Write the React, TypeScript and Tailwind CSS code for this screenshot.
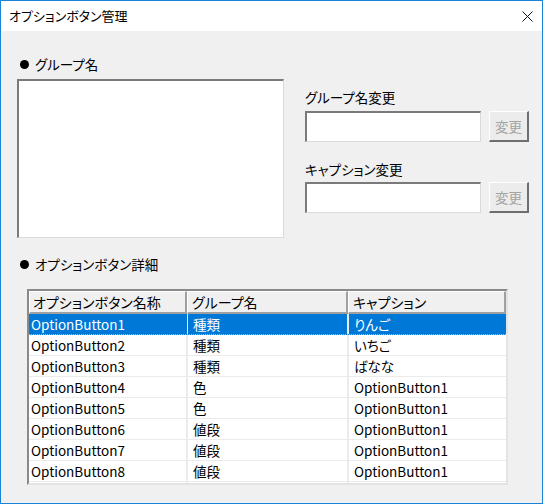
import React from 'react';

const rows = [
  { name: 'OptionButton1', group: '種類', caption: 'りんご' },
  { name: 'OptionButton2', group: '種類', caption: 'いちご' },
  { name: 'OptionButton3', group: '種類', caption: 'ばなな' },
  { name: 'OptionButton4', group: '色', caption: 'OptionButton1' },
  { name: 'OptionButton5', group: '色', caption: 'OptionButton1' },
  { name: 'OptionButton6', group: '値段', caption: 'OptionButton1' },
  { name: 'OptionButton7', group: '値段', caption: 'OptionButton1' },
  { name: 'OptionButton8', group: '値段', caption: 'OptionButton1' },
];

const font = "font-['Meiryo_UI','Noto_Sans_CJK_JP',sans-serif] [font-feature-settings:'palt']";

const Heading: React.FC<{ text: string }> = ({ text }) => (
  <div className="flex items-center h-[20px] text-[13.5px] text-black">
    <span className="ml-[3px] w-[9px] h-[9px] rounded-full bg-black" />
    <span className="ml-[6px]">{text}</span>
  </div>
);

const Sunken: React.FC<{ className?: string; children?: React.ReactNode }> = ({ className = '', children }) => (
  <div className={`border-t-2 border-l-2 border-r border-b border-t-[#7a7a7a] border-l-[#7a7a7a] border-r-[#dadada] border-b-[#dadada] bg-white ${className}`}>
    {children}
  </div>
);

const DisabledButton: React.FC = () => (
  <button
    disabled
    className="w-[40px] h-[31px] bg-[#ececec] border-t border-l border-r-2 border-b-2 border-t-white border-l-white border-r-[#6e6e6e] border-b-[#6e6e6e] text-[13.5px] text-[#a3a3a3] flex items-center justify-center"
  >
    変更
  </button>
);

const App: React.FC = () => {
  return (
    <div className={`w-[543px] h-[504px] flex flex-col border border-[#1883d7] ${font}`}>
      {/* title bar */}
      <div className="h-[30px] bg-white flex items-center justify-between pl-[8px] pr-[9px]">
        <span className="text-[13px] text-black">オプションボタン管理</span>
        <svg width="11" height="11" viewBox="0 0 11 11">
          <path d="M0.5 0.5L10.5 10.5M10.5 0.5L0.5 10.5" stroke="#111" strokeWidth="1" />
        </svg>
      </div>

      <div className="flex-1 bg-[#f0f0f0] pl-[16px] flex flex-col">
        <div className="mt-[23px]">
          <Heading text="グループ名" />
        </div>

        <div className="mt-[5px] flex">
          <Sunken className="w-[267px] h-[159px]" />
          <div className="ml-[21px] pt-[8px] flex flex-col">
            <div className="h-[20px] flex items-center text-[13.5px] text-black">グループ名変更</div>
            <div className="mt-[4px] flex">
              <Sunken className="w-[176px] h-[31px]" />
              <div className="ml-[8px]">
                <DisabledButton />
              </div>
            </div>
            <div className="mt-[17px] h-[20px] flex items-center text-[13.5px] text-black">キャプション変更</div>
            <div className="mt-[3px] flex">
              <Sunken className="w-[176px] h-[31px]" />
              <div className="ml-[8px]">
                <DisabledButton />
              </div>
            </div>
          </div>
        </div>

        <div className="mt-[16px]">
          <Heading text="オプションボタン詳細" />
        </div>

        <div className="mt-[15px] ml-[10px] w-[481px] h-[196px] border-t-2 border-l-2 border-r-2 border-b-2 border-t-[#8a8a8a] border-l-[#8a8a8a] border-r-[#e3e3e3] border-b-[#e3e3e3] bg-white flex flex-col overflow-hidden">
          <div className="h-[23px] flex bg-[#f0f0f0] text-[14px] text-black">
            <div className="w-[158px] border-t border-l border-t-white border-l-white border-r-2 border-b-2 border-r-[#a0a0a0] border-b-[#a0a0a0] pl-[3px] flex items-center">
              オプションボタン名称
            </div>
            <div className="w-[161px] border-t border-l border-t-white border-l-white border-r-2 border-b-2 border-r-[#a0a0a0] border-b-[#a0a0a0] pl-[4px] flex items-center">
              グループ名
            </div>
            <div className="flex-1 border-t border-l border-t-white border-l-white border-r-2 border-b-2 border-r-[#a0a0a0] border-b-[#a0a0a0] pl-[4px] flex items-center">
              キャプション
            </div>
          </div>
          {rows.map((r, i) => {
            const sel = i === 0;
            return (
              <div
                key={r.name}
                className={`h-[21px] flex text-[13.5px] ${
                  sel ? 'bg-[#0078d7] text-white border-b border-dotted border-b-[#f0b070]' : 'text-black border-b border-b-[#ebebeb]'
                }`}
              >
                <div className={`w-[158px] pl-[2px] flex items-center border-r ${sel ? 'border-r-[#0078d7]' : 'border-r-[#ebebeb]'}`}>
                  {r.name}
                </div>
                <div className="w-[161px] pl-[5px] flex items-center border-l border-r border-l-[#ebebeb] border-r-[#ebebeb]">
                  {r.group}
                </div>
                <div className="flex-1 pl-[5px] flex items-center border-l border-l-[#ebebeb]">{r.caption}</div>
              </div>
            );
          })}
          <div className="flex-1 flex">
            <div className="w-[158px] border-r border-r-[#ebebeb]" />
            <div className="w-[161px] border-l border-r border-l-[#ebebeb] border-r-[#ebebeb]" />
            <div className="flex-1 border-l border-l-[#ebebeb]" />
          </div>
        </div>
      </div>
    </div>
  );
};

export default App;
